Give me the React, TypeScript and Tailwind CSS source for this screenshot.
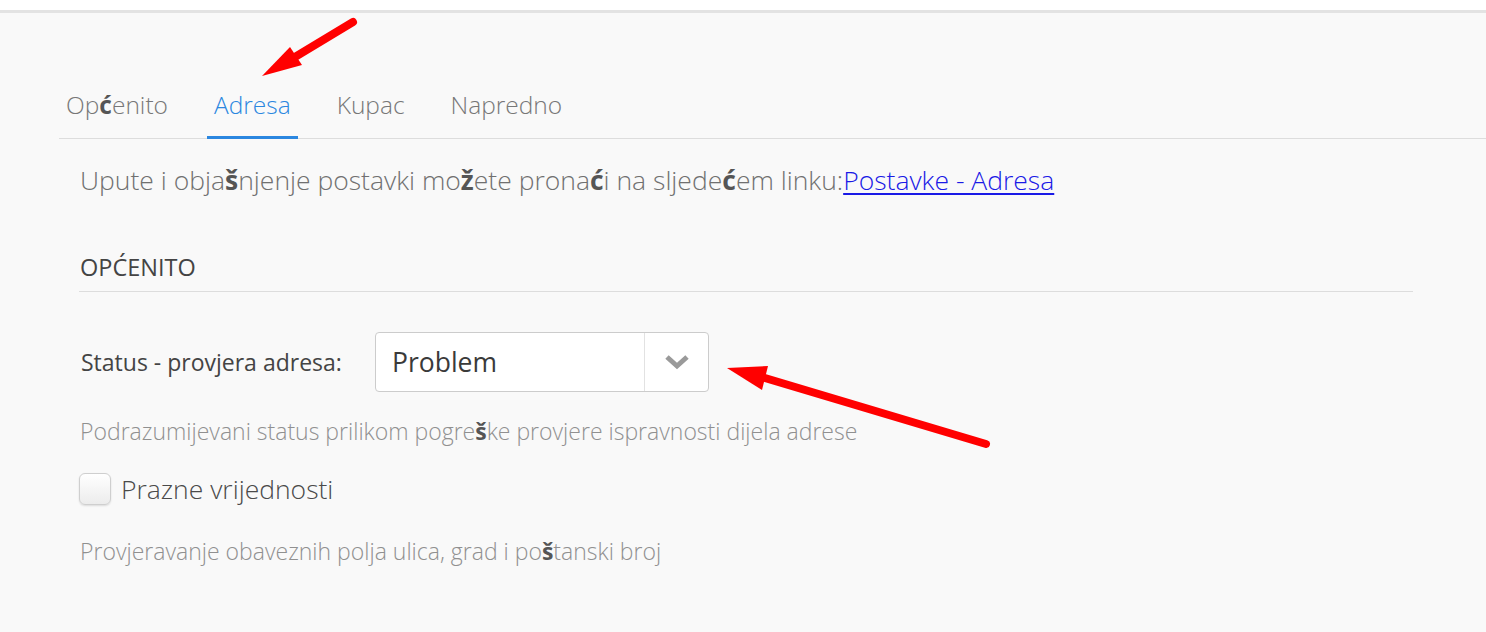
import React from 'react';

// glyphs the page font lacks show up heavier in the reference
const B = ({ children }: { children: React.ReactNode }) => (
  <span className="font-bold text-[#555]">{children}</span>
);

const tabs = ['Općenito', 'Adresa', 'Kupac', 'Napredno'];

function Arrow({ x1, y1, x2, y2, head }: { x1: number; y1: number; x2: number; y2: number; head: string }) {
  return (
    <g>
      <line x1={x1} y1={y1} x2={x2} y2={y2} stroke="#ff0000" strokeWidth={8} strokeLinecap="round" />
      <polygon points={head} fill="#ff0000" />
    </g>
  );
}

export default function App() {
  return (
    <div className="relative min-h-[632px] bg-white pt-[10px] font-['Open_Sans',sans-serif]">
      <div className="min-h-[622px] border-t-[3px] border-[#e3e3e3] bg-[#f9f9f9]">
        {/* Tabs */}
        <div className="ml-[59px] flex gap-[32px] border-b border-[#dddddd] pt-[76px]">
          {tabs.map((t, i) => (
            <div
              key={t}
              className={
                'mb-[-1px] border-b-[3px] px-[7px] pb-[15px] text-[24.5px] font-light leading-[32px] ' +
                (i === 1 ? 'border-[#2b87e0] text-[#2b87e0]' : 'border-transparent text-[#777777]')
              }
            >
              {t === 'Općenito' ? (
                <>
                  Op<B>ć</B>enito
                </>
              ) : (
                t
              )}
            </div>
          ))}
        </div>

        <div className="ml-[79px] mr-[73px]">
          <p className="mt-[25px] pl-px text-[26.5px] font-light leading-[32px] text-[#707070]">
            Upute i obja<B>š</B>njenje postavki mo<B>ž</B>ete prona<B>ć</B>i na sljede<B>ć</B>em linku:
            <a href="#" className="text-[#1a1ae6] underline decoration-2 underline-offset-[3px]">
              Postavke - Adresa
            </a>
          </p>

          <div className="mt-[57px] border-b border-[#dddddd] pb-[10px] pl-px text-[23.5px] leading-[28px] text-[#444444]">
            OPĆENITO
          </div>

          <div className="mt-[40px] flex items-center">
            <label className="w-[296px] pl-[2px] text-[23px] leading-[28px] text-[#444444]">
              Status - provjera adresa:
            </label>
            <div className="flex h-[60px] w-[334px] items-stretch rounded-[4px] border border-[#cccccc] bg-white">
              <div className="flex flex-1 items-center pl-[16px] text-[26.5px] leading-none text-[#3a3a3a]">Problem</div>
              <div className="flex w-[64px] items-center justify-center border-l border-[#e2e2e2]">
                <svg width="26" height="16" viewBox="0 0 26 16">
                  <polyline points="3,3 13,12 23,3" fill="none" stroke="#9a9a9a" strokeWidth="5" />
                </svg>
              </div>
            </div>
          </div>

          <p className="mt-[25px] pl-px text-[23px] font-light leading-[28px] text-[#909090]">
            Podrazumijevani status prilikom pogre<B>š</B>ke provjere ispravnosti dijela adrese
          </p>

          <div className="mt-[28px] flex items-center gap-[10px]">
            <div className="h-[32px] w-[32px] rounded-[6px] border border-[#cfcfcf] bg-gradient-to-b from-white to-[#ececec] shadow-[0_1px_2px_rgba(0,0,0,0.12)]" />
            <span className="text-[26.5px] font-light leading-[32px] text-[#4a4a4a]">Prazne vrijednosti</span>
          </div>

          <p className="mt-[32px] pl-px text-[23px] font-light leading-[28px] text-[#909090]">
            Provjeravanje obaveznih polja ulica, grad i po<B>š</B>tanski broj
          </p>
        </div>
      </div>

      {/* annotation arrows */}
      <svg className="pointer-events-none absolute left-0 top-0" width="1486" height="632">
        <Arrow x1={353} y1={22} x2={285} y2={63} head="262,76 290,47 302,65" />
        <Arrow x1={986} y1={444} x2={755} y2={375} head="727,368 768,366 762,390" />
      </svg>
    </div>
  );
}
